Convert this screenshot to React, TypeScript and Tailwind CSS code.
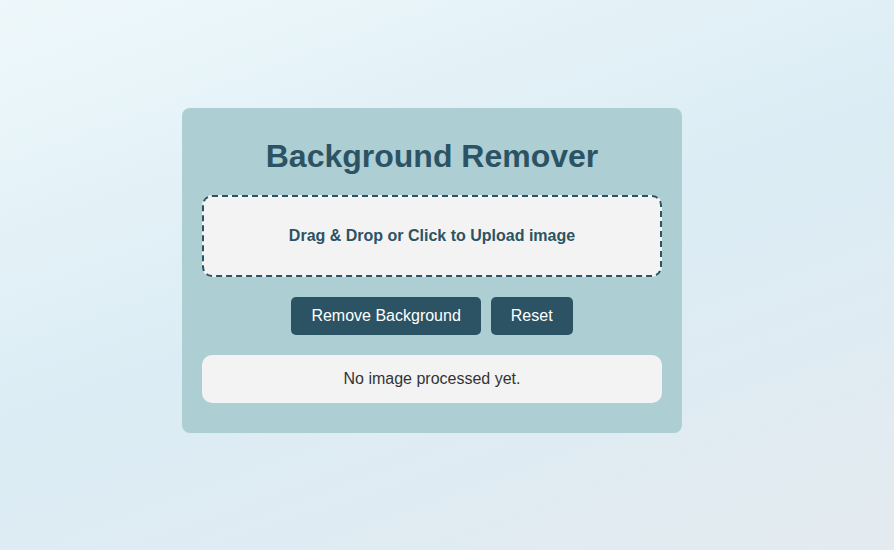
import React from "react";

export default function App() {
  return (
    <div
      className="w-full h-[550px] flex items-center justify-center pr-[30px] pb-[9px] bg-[linear-gradient(160deg,#eef8fb_0%,#dbecf4_50%,#e4ebf0_100%)]"
      style={{ fontFamily: '"Liberation Sans", Arial, sans-serif' }}
    >
      <div className="w-[500px] bg-[#adced3] rounded-[8px] px-5 pt-[30px] pb-[30px] flex flex-col">
        <h1 className="text-[32px] font-bold text-[#2c5364] text-center leading-[37px] mb-5">
          Background Remover
        </h1>
        <div className="h-[82px] border-2 border-dashed border-[#2c5364] rounded-[10px] bg-[#f3f3f3] flex items-center justify-center">
          <span className="text-[16px] font-bold text-[#2c5364]">
            Drag &amp; Drop or Click to Upload image
          </span>
        </div>
        <div className="flex justify-center gap-[10px] mt-5">
          <button className="h-[38px] px-5 bg-[#2c5364] text-white text-[16px] rounded-[5px]">
            Remove Background
          </button>
          <button className="h-[38px] px-5 bg-[#2c5364] text-white text-[16px] rounded-[5px]">
            Reset
          </button>
        </div>
        <div className="mt-5 h-[48px] bg-[#f3f3f3] rounded-[10px] flex items-center justify-center text-[16px] text-[#333]">
          No image processed yet.
        </div>
      </div>
    </div>
  );
}
